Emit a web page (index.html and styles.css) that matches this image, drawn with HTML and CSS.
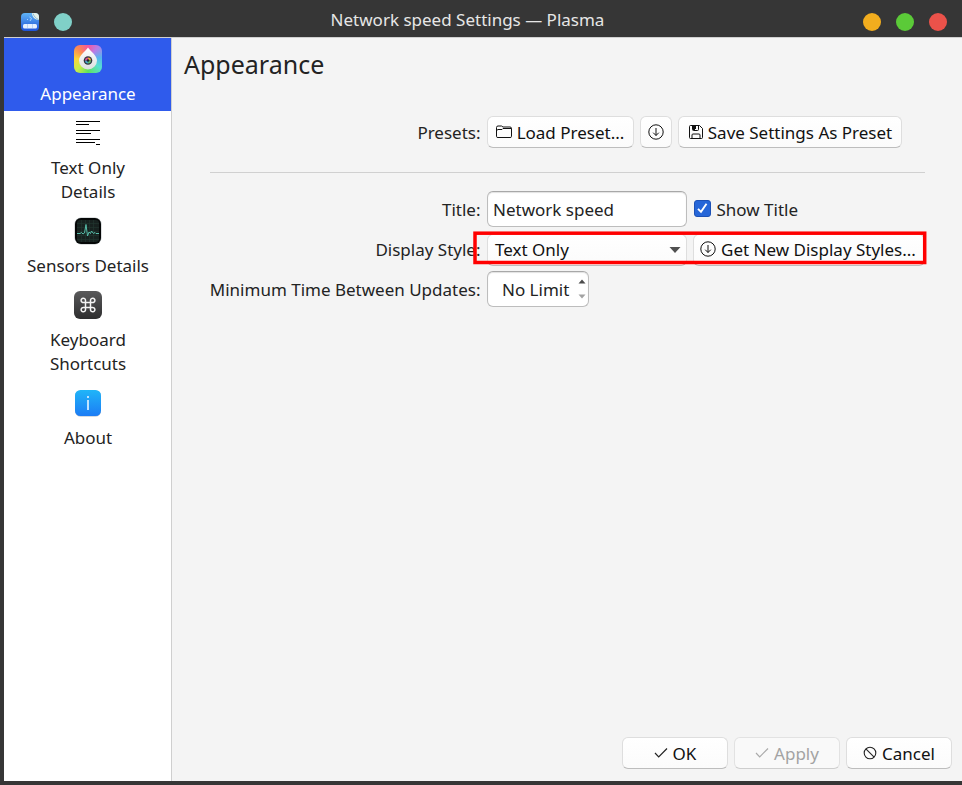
FILE: index.html
```html
<!DOCTYPE html>
<html lang="en">
<head>
<meta charset="utf-8">
<title>Network speed Settings — Plasma</title>
<link rel="stylesheet" href="styles.css">
</head>
<body>
<div class="window">
  <header class="titlebar">
    <div class="title-left">
      <svg width="18" height="18" viewBox="0 0 18 18">
        <defs><linearGradient id="app" x1="0" y1="0" x2="0" y2="1"><stop offset="0" stop-color="#5fb4f6"/><stop offset="1" stop-color="#1f52d6"/></linearGradient></defs>
        <rect width="18" height="18" rx="4" fill="url(#app)"/>
        <path d="M11 0h3a4 4 0 0 1 4 4v3C14 7 11 4 11 0z" fill="#e6f1e8"/>
        <path d="M12 .5c1 3 3 5 5.500 6" stroke="#8bbbd8" stroke-width="1" fill="none"/>
        <path d="M8.500 4l2 1.500-1.500 2.500M6 6l1 1" stroke="#a9d5fb" fill="none"/>
        <rect x="2" y="11" width="14" height="4.500" rx="1.500" fill="#e7f1ff"/>
        <path d="M6.500 11v4M11.500 11v4" stroke="#a9c7f3" stroke-width=".7"/>
      </svg>
      <span class="dot teal"></span>
    </div>
    <div class="title-text">Network speed Settings — Plasma</div>
    <div class="title-right"><span class="dot yellow"></span><span class="dot green"></span><span class="dot red"></span></div>
  </header>
  <div class="body">
    <nav class="sidebar">
      <div class="item active">
        <div class="app-icon">
          <svg width="28" height="28" viewBox="0 0 28 28">
            <defs><linearGradient id="drop" x1="0" y1="0" x2="0" y2="1"><stop offset="0" stop-color="#fff"/><stop offset="1" stop-color="#dcdfe0"/></linearGradient></defs>
            <path d="M14 2.500C16 6 23 10 23 15.500a9 9 0 0 1-18 0C5 10 12 6 14 2.500z" fill="url(#drop)"/>
            <circle cx="14" cy="15.500" r="4.300" fill="#303540"/>
            <path d="M14 15.500v-3a3 3 0 0 1 3 3z" fill="#efa33a"/>
            <path d="M14 15.500h3a3 3 0 0 1-3 3z" fill="#59b96a"/>
            <path d="M14 15.500v3a3 3 0 0 1-3-3z" fill="#45a4c8"/>
            <path d="M14 15.500h-3a3 3 0 0 1 3-3z" fill="#d34f91"/>
            <circle cx="14" cy="15.500" r="1.300" fill="#20242b"/>
          </svg>
        </div>
        <span>Appearance</span>
      </div>
      <div class="item">
        <svg width="28" height="28" viewBox="0 0 28 28"><path d="M2 2.500h24M2 5.500h13M2 11.500h24M2 14.500h15M2 20.500h24M2 23.500h19M22 25.500h4" stroke="#000"/></svg>
        <span>Text Only<br>Details</span>
      </div>
      <div class="item">
        <svg width="28" height="28" viewBox="0 0 28 28">
          <rect x=".5" y=".5" width="27" height="27" rx="6.500" fill="#b9c0c2"/>
          <rect x="1" y="1" width="26" height="26" rx="6" fill="#050707"/>
          <rect x="3" y="3" width="22" height="22" rx="3" fill="#17211f"/>
          <path d="M7.500 3v22M11.500 3v22M15.500 3v22M19.500 3v22M3 6.500h22M3 10.500h22M3 14.500h22M3 18.500h22M3 22.500h22" stroke="#223731" stroke-width=".6"/>
          <path d="M3 16.500h3l1.500-1 1.500 1.500 1.500-1L12 7.500l1.500 11.500 1.500-4 1.500 1.500 1-2.500 2 2.500 1.500-1 1 1H25" stroke="#57bda9" fill="none"/>
        </svg>
        <span>Sensors Details</span>
      </div>
      <div class="item">
        <svg width="28" height="28" viewBox="0 0 28 28">
          <defs><linearGradient id="key" x1="0" y1="0" x2="0" y2="1"><stop offset="0" stop-color="#5a5a5b"/><stop offset="1" stop-color="#2e2e2f"/></linearGradient></defs>
          <rect width="28" height="28" rx="6" fill="url(#key)"/>
          <path d="M11.500 11.500h5v5h-5zM11.500 11.500H9.700a2.200 2.200 0 1 1 1.800-2.200zM16.500 11.500V9.300a2.200 2.200 0 1 1 1.800 2.200zM16.500 16.500h1.800a2.200 2.200 0 1 1-1.800 2.200zM11.500 16.500v2.200a2.200 2.200 0 1 1-1.800-2.200z" fill="none" stroke="#f4f4f4" stroke-width="1.500"/>
        </svg>
        <span>Keyboard<br>Shortcuts</span>
      </div>
      <div class="item">
        <svg width="28" height="28" viewBox="0 0 28 28">
          <defs><linearGradient id="info" x1="0" y1="0" x2="0" y2="1"><stop offset="0" stop-color="#20b5f8"/><stop offset="1" stop-color="#1c7cf5"/></linearGradient></defs>
          <rect x="1" y="1.500" width="26" height="26" rx="5.500" fill="#aab5c4"/>
          <rect x="1" y="1" width="26" height="26" rx="5.500" fill="url(#info)"/>
          <path d="M13 7h2v2h-2zM13 11h2v10h-2z" fill="#bfe3ff"/>
        </svg>
        <span>About</span>
      </div>
    </nav>
    <main class="content">
      <h1>Appearance</h1>
      <div class="form">
        <div class="row presets">
          <label>Presets:</label>
          <button class="btn load"><svg width="16" height="16" viewBox="0 0 16 16"><path d="M.5 12.500v-9q0-1.500 1.500-1.500h3.500l1.500 1h7q1.500 0 1.500 1.500v8q0 1-1.500 1H2q-1.500 0-1.500-1zM.5 6.500l1.500-1h4l1-1h8.500" fill="none" stroke="#111"/></svg>Load Preset...</button>
          <button class="btn round"><svg width="16" height="16" viewBox="0 0 16 16"><path d="M8 4v7.500M5.200 8.700L8 11.500l2.800-2.800" fill="none" stroke="#111"/><circle cx="8" cy="8" r="7.200" fill="none" stroke="#111"/></svg></button>
          <button class="btn save"><svg width="16" height="16" viewBox="0 0 16 16"><path d="M2.500 1.500h9l3 3v9q0 1-1 1h-11q-1 0-1-1v-11q0-1 1-1zM4 14v-3q0-1 1-1h6q1 0 1 1v3M4.500 2v3.500q0 1 1 1h4q1 0 1-1V2" fill="none" stroke="#111"/><path d="M5 2h3v3H7v1H5z" fill="#111"/></svg>Save Settings As Preset</button>
        </div>
        <div class="separator"></div>
        <div class="row title-row">
          <label>Title:</label>
          <div class="field">Network speed</div>
          <div class="check"><svg width="17" height="17" viewBox="0 0 17 17"><rect x=".5" y=".5" width="16" height="16" rx="2.500" fill="#2666d8" stroke="#1d51b5"/><path d="M4 8.800l3 3 5.500-8" fill="none" stroke="#fff" stroke-width="1.900"/></svg>Show Title</div>
        </div>
        <div class="row style-row">
          <label>Display Style:</label>
          <button class="btn combo">Text Only<svg width="12" height="6" viewBox="0 0 12 6"><path d="M.5 0h11L6 6z" fill="#505050"/></svg></button>
          <button class="btn get"><svg width="16" height="16" viewBox="0 0 16 16"><path d="M8 4v7.500M5.200 8.700L8 11.500l2.800-2.800" fill="none" stroke="#111"/><circle cx="8" cy="8" r="7.200" fill="none" stroke="#111"/></svg>Get New Display Styles...</button>
          <svg class="highlight" width="454" height="34" viewBox="0 0 454 34"><rect x="2" y="2.200" width="449.700" height="29.300" fill="none" stroke="#f00" stroke-width="3.500"/></svg>
        </div>
        <div class="row limit-row">
          <label>Minimum Time Between Updates:</label>
          <div class="field spin">No Limit<svg width="8" height="20" viewBox="0 0 8 20"><path d="M.5 4.500L4 .5l3.500 4z" fill="#4b4b4b"/><path d="M.5 15.500h7L4 19.500z" fill="#a2a2a2"/></svg></div>
        </div>
      </div>
      <footer class="actions">
        <button class="btn"><svg width="14" height="14" viewBox="0 0 14 14"><path d="M1 7l3.700 3.800L13 2.500" fill="none" stroke="#222" stroke-width="1.200"/></svg>OK</button>
        <button class="btn disabled"><svg width="14" height="14" viewBox="0 0 14 14"><path d="M1 7l3.700 3.800L13 2.500" fill="none" stroke="#aaa" stroke-width="1.200"/></svg>Apply</button>
        <button class="btn"><svg width="14" height="14" viewBox="0 0 14 14"><circle cx="7" cy="7" r="5.800" fill="none" stroke="#222" stroke-width="1.100"/><path d="M2.900 2.900l8.200 8.200" stroke="#222" stroke-width="1.100"/></svg>Cancel</button>
      </footer>
    </main>
  </div>
</div>
</body>
</html>
```
FILE: styles.css
```css
* { box-sizing: border-box; }
body { margin: 0; font-family: "Noto Sans", sans-serif; font-size: 17px; line-height: 24px; color: #232323; overflow: hidden; }
svg { display: block; flex: none; }
.window { width: 962px; height: 785px; background: #363636; display: flex; flex-direction: column; padding-bottom: 4px; }
.titlebar { height: 38px; border-bottom: 1px solid #d0d0d0; margin-left: 4px; display: grid; grid-template-columns: 160px 1fr 160px; align-items: center; padding-top: 6px; color: #e6e6e6; }
.title-left { display: flex; gap: 15px; padding-left: 17px; }
.title-text { text-align: center; padding-right: 31px; margin-top: -4px; white-space: nowrap; }
.title-right { display: flex; gap: 15px; justify-content: flex-end; padding-right: 15px; }
.dot { width: 18px; height: 18px; border-radius: 50%; }
.teal { background: #80d0c8; }
.yellow { background: #f2ad1e; }
.green { background: #5bca38; }
.red { background: #eb524a; }
.body { flex: 1; display: flex; min-height: 0; margin-left: 4px; }
.sidebar { width: 168px; background: #fff; border-right: 1px solid #cfcfcf; }
.item { display: flex; flex-direction: column; align-items: center; gap: 9px; padding: 8px 0 5px; text-align: center; color: #232323; }
.item span { padding-left: 1px; }
.item.active { background: #2f5bec; color: #fff; padding-top: 7px; }
.app-icon { border-radius: 6px; overflow: hidden; background: conic-gradient(#f7569c, #b77de8 40deg, #55b6ee 85deg, #57dfd0 125deg, #5ee35a 180deg, #c8ec4a 225deg, #fbd53a 270deg, #fb8a52 315deg, #f7569c); }
.content { flex: 1; background: #f4f4f4; display: flex; flex-direction: column; min-width: 0; }
h1 { font-size: 25px; line-height: 36px; font-weight: 400; margin: 8px 0 0 12px; }
.form { padding-left: 38px; }
.row { display: flex; align-items: center; position: relative; white-space: nowrap; }
label { width: 271px; margin-right: 6px; padding-right: .5px; display: flex; justify-content: flex-end; }
.presets { height: 32px; margin-top: 34px; }
.presets label, .title-row label, .limit-row label { padding-top: 2px; }
.btn { font: inherit; color: #111; height: 32px; padding: 1px 0 0; border: 1px solid #dedede; border-bottom-color: #bdbdbd; border-radius: 6px; background: linear-gradient(#fff, #fbfbfb); display: flex; align-items: center; justify-content: center; gap: 5px; white-space: nowrap; }
.btn svg { margin-top: -2px; }
.load { width: 147px; margin-right: 6px; padding-right: 1px; }
.round { width: 32px; margin-right: 6px; padding-right: 1px; }
.save { width: 224px; gap: 4px; }
.separator { width: 715px; height: 1px; background: #d0d0d0; margin-top: 24px; }
.title-row { margin-top: 18px; height: 36px; }
.field { width: 200px; height: 36px; border: 1px solid #bdbdbd; border-top-color: #a8a8a8; border-radius: 6px; background: #fff; padding: 2px 5px 0; display: flex; align-items: center; box-shadow: inset 0 1px 1px #e2e2e2; }
.check { display: flex; align-items: center; gap: 6px; margin-left: 7px; padding-top: 2px; }
.check svg { margin: -3px 0 0 -.5px; }
.style-row { margin-top: 6px; height: 34px; }
.style-row .btn { padding-top: 0; }
.combo { width: 200px; justify-content: space-between; padding: 0 5px 0 7px; margin-right: 6px; }
.btn.combo svg { margin-top: 0; }
.get { width: 232px; padding-right: 2px; }
.highlight { position: absolute; left: 263px; top: -2px; }
.limit-row { margin-top: 4px; height: 36px; }
.spin { width: 102px; padding: 2px 2px 0 14px; justify-content: space-between; }
.spin svg { margin-top: -3px; }
.actions { margin-top: auto; display: flex; justify-content: flex-end; gap: 6px; padding: 0 10px 12px 0; }
.actions .btn { width: 106px; }
.actions .disabled { color: #a3a3a3; background: #f9f9f9; border-color: #e2e2e2; border-bottom-color: #cecece; }
```
